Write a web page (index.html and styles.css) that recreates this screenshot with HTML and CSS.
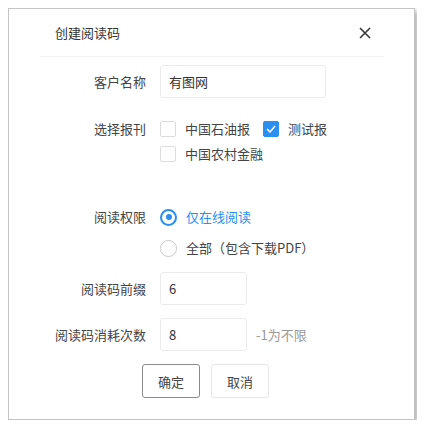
FILE: index.html
```html
<!DOCTYPE html>
<html lang="zh-CN">
<head>
    <meta charset="UTF-8">
    <meta name="viewport" content="width=device-width, initial-scale=1.0">
    <title>创建阅读码</title>
    <link rel="stylesheet" href="styles.css">
</head>
<body>
    <div class="dialog">
        <div class="dialog-header">
            <span class="dialog-title">创建阅读码</span>
            <span class="close">
                <svg width="12" height="12" viewBox="0 0 12 12"><path d="M1 1L11 11M11 1L1 11" stroke="#333" stroke-width="1.5" fill="none"/></svg>
            </span>
        </div>
        <form class="form">
            <div class="form-row row-name">
                <label class="form-label">客户名称</label>
                <input class="input input-wide" type="text" value="有图网">
            </div>
            <div class="form-row row-paper">
                <label class="form-label">选择报刊</label>
                <div class="check-group">
                    <div class="check-line">
                        <span class="check-item"><span class="checkbox"></span>中国石油报</span>
                        <span class="check-item"><span class="checkbox checked">
                            <svg width="10" height="8" viewBox="0 0 10 8"><path d="M1 4L4 7L9 1" stroke="#fff" stroke-width="1.5" fill="none"/></svg>
                        </span>测试报</span>
                    </div>
                    <div class="check-line">
                        <span class="check-item"><span class="checkbox"></span>中国农村金融</span>
                    </div>
                </div>
            </div>
            <div class="form-row row-auth">
                <label class="form-label">阅读权限</label>
                <div class="radio-group">
                    <span class="radio-item active"><span class="radio"></span>仅在线阅读</span>
                    <span class="radio-item"><span class="radio"></span>全部（包含下载PDF）</span>
                </div>
            </div>
            <div class="form-row row-prefix">
                <label class="form-label">阅读码前缀</label>
                <input class="input input-short" type="text" value="6">
            </div>
            <div class="form-row row-count">
                <label class="form-label">阅读码消耗次数</label>
                <input class="input input-short" type="text" value="8">
                <span class="hint">-1为不限</span>
            </div>
            <div class="btn-row">
                <button type="button" class="btn btn-ok">确定</button>
                <button type="button" class="btn">取消</button>
            </div>
        </form>
    </div>
</body>
</html>
```

FILE: styles.css
```css
body {
    margin: 8px;
    font-family: "Noto Sans CJK SC", "Liberation Sans", sans-serif;
    font-size: 13px;
    color: #444;
    background: #fff;
}
.dialog {
    width: 407px;
    height: 412px;
    border: 1px solid #c4c4c4;
    box-shadow: 3px 3px 6px rgba(0, 0, 0, 0.32);
    padding: 0 30px 0 31px;
    box-sizing: border-box;
}
.dialog-header {
    height: 47px;
    border-bottom: 1px solid #f2f2f2;
    display: flex;
    align-items: center;
    justify-content: space-between;
    padding: 0 13px 0 15px;
}
.dialog-title {
    color: #333;
}
.close {
    display: flex;
}
.form-row {
    display: flex;
    align-items: flex-start;
}
.form-label {
    width: 106px;
    text-align: right;
    margin-right: 14px;
    flex-shrink: 0;
    color: #444;
}
.row-name {
    margin-top: 8px;
    align-items: center;
}
.input {
    height: 33px;
    border: 1px solid #ebebeb;
    border-radius: 3px;
    padding: 0 8px;
    box-sizing: border-box;
    font-family: inherit;
    font-size: 13px;
    color: #333;
    outline: none;
}
.input-wide {
    width: 166px;
}
.input-short {
    width: 87px;
}
.row-paper {
    margin-top: 21px;
    line-height: 20px;
}
.check-line {
    display: flex;
    height: 20px;
    align-items: center;
    margin-bottom: 5px;
}
.check-item {
    display: flex;
    align-items: center;
    margin-right: 13px;
}
.checkbox {
    width: 16px;
    height: 16px;
    border: 1px solid #dcdcdc;
    border-radius: 2px;
    box-sizing: border-box;
    margin-right: 9px;
    display: flex;
    align-items: center;
    justify-content: center;
}
.checkbox.checked {
    background: #2b8ff0;
    border-color: #2b8ff0;
}
.row-auth {
    margin-top: 38px;
    line-height: 20px;
}
.radio-group {
    display: flex;
    flex-direction: column;
    gap: 11px;
}
.radio-item {
    display: flex;
    align-items: center;
    height: 20px;
}
.radio {
    width: 17px;
    height: 17px;
    border: 1px solid #c8c8c8;
    border-radius: 50%;
    box-sizing: border-box;
    margin-right: 9px;
    position: relative;
}
.radio-item.active {
    color: #2b8ff0;
}
.radio-item.active .radio {
    border: 2px solid #2b8ff0;
}
.radio-item.active .radio::after {
    content: "";
    position: absolute;
    left: 3.5px;
    top: 3.5px;
    width: 6px;
    height: 6px;
    border-radius: 50%;
    background: #2b8ff0;
}
.row-prefix {
    margin-top: 14px;
    align-items: center;
}
.row-count {
    margin-top: 13px;
    align-items: center;
}
.hint {
    color: #999;
    margin-left: 9px;
}
.btn-row {
    display: flex;
    gap: 11px;
    margin-top: 13px;
    padding-left: 102px;
}
.btn {
    width: 58px;
    height: 34px;
    border: 1px solid #e6e6e6;
    border-radius: 3px;
    background: #fff;
    font-family: inherit;
    font-size: 13px;
    color: #444;
    padding: 0;
}
.btn-ok {
    border-color: #8a8a8a;
}
```
